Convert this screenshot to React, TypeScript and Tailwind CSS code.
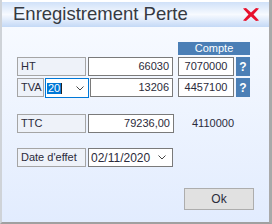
import React from 'react'

const font = "font-['Liberation_Sans',Arial,sans-serif]"
const labelBox = 'h-[19px] border border-[#a5a5a5] bg-[#eef2f9] pl-[3px] flex items-center text-[11px] text-[#2b2b3b] shrink-0'
const inputBox = 'h-[19px] border border-[#7a7a7a] bg-white flex items-center text-[11px] text-[#2b2b3b] shrink-0'

function Help() {
  return (
    <div className="ml-[2px] w-[14px] h-[19px] bg-[#4b7fb6] text-white text-[12px] font-bold flex items-center justify-center shrink-0">?</div>
  )
}

function Chevron() {
  return (
    <svg width="8" height="5" viewBox="0 0 8 5" className="shrink-0">
      <path d="M0.5 0.5 L4 4 L7.5 0.5" fill="none" stroke="#444" strokeWidth="1" />
    </svg>
  )
}

export default function App() {
  return (
    <div className={`w-[272px] h-[224px] flex flex-col bg-white border-l-2 border-r-[3px] border-b-2 border-l-[#cfd3d8] border-r-[#a9a9a9] border-b-[#a0a0a0] ${font}`}>
      {/* barre de titre */}
      <div className="mt-[2px] h-[25px] shrink-0 flex items-center justify-between pl-[11px] pr-[9px] bg-gradient-to-b from-[#d0e1f8] via-[#f7faff] to-[#c4d9f6]">
        <span className="text-[18.5px] leading-none text-[#363a42]">Enregistrement Perte</span>
        <svg width="18" height="15" viewBox="0 0 18 15">
          <path d="M1 1.5 L4 1 L9 5.5 L14 1 L17 1.5 L11.5 7.5 L17 13.5 L14 14 L9 9.5 L4 14 L1 13.5 L6.5 7.5 Z" fill="#e8112d" />
        </svg>
      </div>

      <div className="flex-1 flex flex-col pl-[15px] pr-[15px] pt-[15px] bg-gradient-to-b from-[#f7faff] to-[#e2ecfe]">
        <div className="flex">
          <div className="w-[161px] shrink-0" />
          <div className="w-[72px] h-[13px] bg-[#4b7fb6] text-white text-[11px] leading-[13px] text-center">Compte</div>
        </div>

        {/* HT */}
        <div className="flex mt-[2px]">
          <div className={`${labelBox} w-[69px]`}>HT</div>
          <div className={`${inputBox} ml-[2px] w-[85px] justify-end pr-[3px]`}>66030</div>
          <div className={`${inputBox} ml-[5px] w-[56px] justify-center`}>7070000</div>
          <Help />
        </div>

        {/* TVA */}
        <div className="flex mt-[2px]">
          <div className={`${labelBox} w-[27px]`}>TVA</div>
          <div className="ml-[1px] w-[44px] h-[20px] border border-[#0078d7] bg-white flex items-center pl-[1px] pr-[4px] justify-between shrink-0">
            <div className="flex items-center">
              <span className="bg-[#0078d7] text-white text-[11px] leading-[11px] px-[1px] h-[11px]">20</span>
              <span className="w-px h-[11px] bg-[#222]" />
            </div>
            <Chevron />
          </div>
          <div className={`${inputBox} ml-[1px] w-[83px] justify-end pr-[3px]`}>13206</div>
          <div className={`${inputBox} ml-[5px] w-[56px] justify-center`}>4457100</div>
          <Help />
        </div>

        {/* TTC */}
        <div className="flex items-center mt-[16px]">
          <div className={`${labelBox} w-[69px]`}>TTC</div>
          <div className={`${inputBox} ml-[2px] w-[86px] justify-end pr-[3px]`}>79236,00</div>
          <span className="ml-[18px] text-[11px] text-[#2b2b3b]">4110000</span>
        </div>

        {/* Date */}
        <div className="flex mt-[15px]">
          <div className={`${labelBox} w-[69px]`}>Date d'effet</div>
          <div className={`${inputBox} ml-[2px] w-[85px] justify-between pl-[2px] pr-[6px] text-[12px]`}>
            <span>02/11/2020</span>
            <Chevron />
          </div>
        </div>

        <div className="flex justify-end mt-[21px]">
          <button className="w-[70px] h-[22px] bg-[#e1e1e1] border border-[#adadad] text-[12px] text-[#2b2b3b]">Ok</button>
        </div>
      </div>
    </div>
  )
}
